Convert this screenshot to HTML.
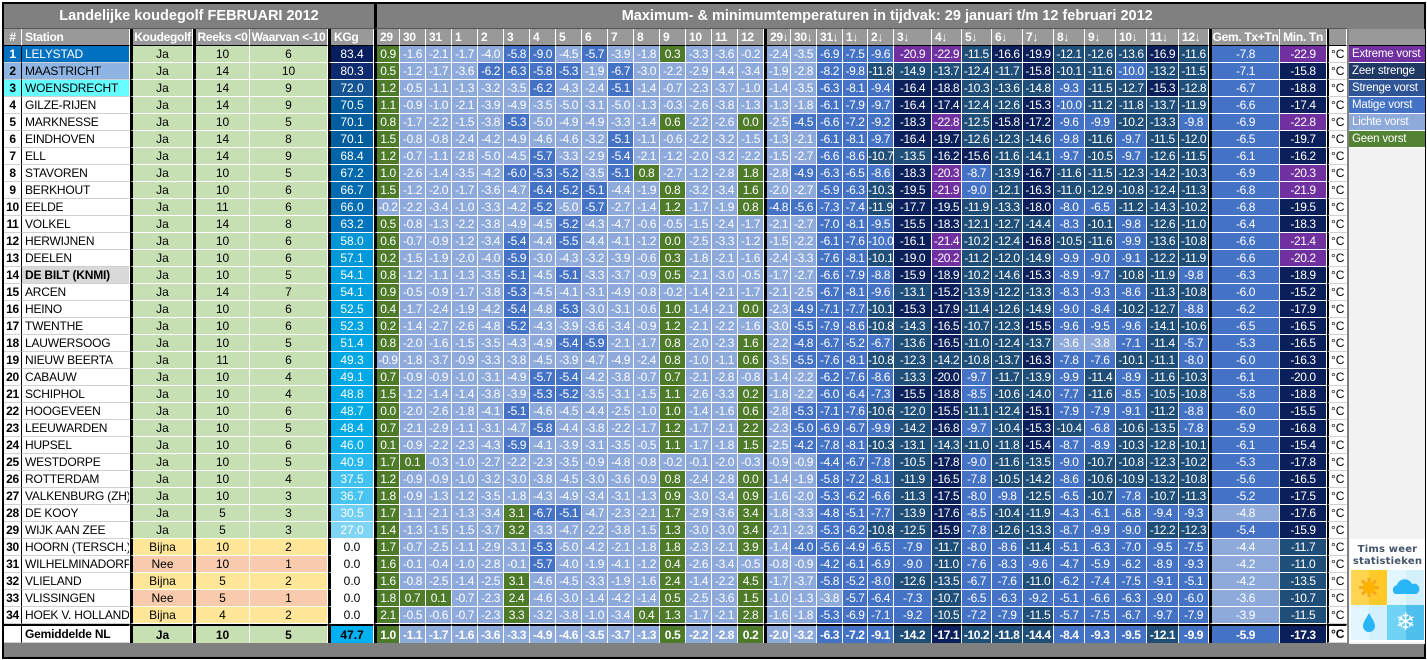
<!DOCTYPE html>
<html><head><meta charset="utf-8">
<style>
*{box-sizing:border-box;margin:0;padding:0}
body{width:1427px;height:660px;background:#fff;font-family:"Liberation Sans",Arial,sans-serif;overflow:hidden;position:relative}
#outer{position:absolute;left:2px;top:2px;width:1424px;height:657px;border:2px solid #000;background:#808080}
table{position:absolute;left:0;top:0;border-collapse:separate;border-spacing:0;table-layout:fixed;width:1343px}
td{height:17px;padding:0;border-right:1px solid #fff;border-bottom:1px solid #fff;font-size:12px;line-height:16px;white-space:nowrap;overflow:hidden;text-align:center;color:#fff}
tr.t td{height:25px;background:#808080;font-weight:bold;font-size:14.5px;color:#fff;border-bottom:1px solid #555;border-right:none}
tr.h td{background:#999;font-weight:bold;color:#fff;text-align:left;padding-left:3px;border-right:1px solid #fff;border-bottom:1px solid #000;letter-spacing:-0.3px}
tr.h td.c{text-align:center;padding-left:0}
tr.d td{background:#fff;color:#000}
tr.d td:nth-child(1){font-weight:bold;font-size:12px;border-right:1px solid #000;border-bottom:1px solid #d0d0d0;letter-spacing:-0.3px}
tr.d td:nth-child(2){text-align:left;padding-left:3px;font-size:12px;letter-spacing:-0.2px;border-bottom:1px solid #d0d0d0}
td.tl{border-left:3px solid #000!important}
td.tl2{border-left:2px solid #000!important}
td.tp{letter-spacing:-0.4px;color:#fff!important}
tr.f td{border-top:2px solid #000;height:19px;font-weight:bold;border-bottom:none}
#legend{position:absolute;left:1345px;top:25px;width:76px;height:615px;background:#f2f2f2}
#legend div.hd{height:17px;background:#999;border-bottom:1px solid #000}
#legend div.l{height:17px;color:#fff;font-size:11.5px;line-height:16px;padding-left:3px;border-bottom:1px solid #fff;white-space:nowrap;overflow:hidden;letter-spacing:-0.2px}
#logo{position:absolute;left:1346px;top:535px;width:75px;height:103px;background:#fff}
#logo .tx{font-family:"DejaVu Sans",sans-serif;font-weight:bold;color:#44546a;font-size:10px;text-align:center;line-height:12px;padding-top:5px;letter-spacing:0.2px}
</style></head><body>
<div id="outer">
<table id="tb">
<colgroup><col style="width:18px"><col style="width:108px"><col style="width:63px"><col style="width:57px"><col style="width:78px"><col style="width:46px">
<col style="width:26px"><col style="width:26px"><col style="width:26px"><col style="width:26px"><col style="width:26px"><col style="width:26px"><col style="width:26px"><col style="width:26px"><col style="width:26px"><col style="width:26px"><col style="width:26px"><col style="width:26px"><col style="width:26px"><col style="width:26px"><col style="width:26px">
<col style="width:27px"><col style="width:26px"><col style="width:26px"><col style="width:25px"><col style="width:26px"><col style="width:38px"><col style="width:30px"><col style="width:30px"><col style="width:31px"><col style="width:31px"><col style="width:31px"><col style="width:31px"><col style="width:31px"><col style="width:32px"><col style="width:30px">
<col style="width:71px"><col style="width:47px"><col style="width:20px"></colgroup>
<tr class="t"><td colspan="6">Landelijke koudegolf FEBRUARI 2012</td><td colspan="33" style="border-left:3px solid #000;padding-left:50px">Maximum- &amp; minimumtemperaturen in tijdvak: 29 januari t/m 12 februari 2012</td></tr>
<tr class="h"><td class="c">#<td>Station<td class="c">Koudegolf<td class="c">Reeks &lt;0<td class="c">Waarvan &lt;-10<td>KGg<td>29<td>30<td>31<td>1<td>2<td>3<td>4<td>5<td>6<td>7<td>8<td>9<td>10<td>11<td>12<td>29↓<td>30↓<td>31↓<td>1↓<td>2↓<td>3↓<td>4↓<td>5↓<td>6↓<td>7↓<td>8↓<td>9↓<td>10↓<td>11↓<td>12↓<td class="c">Gem. Tx+Tn<td class="c">Min. Tn<td></tr>
<tr class="d"><td>1<td>LELYSTAD<td>Ja<td>10<td>6<td>83.4<td>0.9<td>-1.6<td>-2.1<td>-1.7<td>-4.0<td>-5.8<td>-9.0<td>-4.5<td>-5.7<td>-3.9<td>-1.8<td>0.3<td>-3.3<td>-3.6<td>-0.2<td>-2.4<td>-3.5<td>-6.9<td>-7.5<td>-9.6<td>-20.9<td>-22.9<td>-11.5<td>-16.6<td>-19.9<td>-12.1<td>-12.6<td>-13.6<td>-16.9<td>-11.6<td>-7.8<td>-22.9<td>°C</tr>
<tr class="d"><td>2<td>MAASTRICHT<td>Ja<td>14<td>10<td>80.3<td>0.5<td>-1.2<td>-1.7<td>-3.6<td>-6.2<td>-6.3<td>-5.8<td>-5.3<td>-1.9<td>-6.7<td>-3.0<td>-2.2<td>-2.9<td>-4.4<td>-3.4<td>-1.9<td>-2.8<td>-8.2<td>-9.8<td>-11.8<td>-14.9<td>-13.7<td>-12.4<td>-11.7<td>-15.8<td>-10.1<td>-11.6<td>-10.0<td>-13.2<td>-11.5<td>-7.1<td>-15.8<td>°C</tr>
<tr class="d"><td>3<td>WOENSDRECHT<td>Ja<td>14<td>9<td>72.0<td>1.2<td>-0.5<td>-1.1<td>-1.3<td>-3.2<td>-3.5<td>-6.2<td>-4.3<td>-2.4<td>-5.1<td>-1.4<td>-0.7<td>-2.3<td>-3.7<td>-1.0<td>-1.4<td>-3.5<td>-6.3<td>-8.1<td>-9.4<td>-16.4<td>-18.8<td>-10.3<td>-13.6<td>-14.8<td>-9.3<td>-11.5<td>-12.7<td>-15.3<td>-12.8<td>-6.7<td>-18.8<td>°C</tr>
<tr class="d"><td>4<td>GILZE-RIJEN<td>Ja<td>14<td>9<td>70.5<td>1.1<td>-0.9<td>-1.0<td>-2.1<td>-3.9<td>-4.9<td>-3.5<td>-5.0<td>-3.1<td>-5.0<td>-1.3<td>-0.3<td>-2.6<td>-3.8<td>-1.3<td>-1.3<td>-1.8<td>-6.1<td>-7.9<td>-9.7<td>-16.4<td>-17.4<td>-12.4<td>-12.6<td>-15.3<td>-10.0<td>-11.2<td>-11.8<td>-13.7<td>-11.9<td>-6.6<td>-17.4<td>°C</tr>
<tr class="d"><td>5<td>MARKNESSE<td>Ja<td>10<td>5<td>70.1<td>0.8<td>-1.7<td>-2.2<td>-1.5<td>-3.8<td>-5.3<td>-5.0<td>-4.9<td>-4.9<td>-3.3<td>-1.4<td>0.6<td>-2.2<td>-2.6<td>0.0<td>-2.5<td>-4.5<td>-6.6<td>-7.2<td>-9.2<td>-18.3<td>-22.8<td>-12.5<td>-15.8<td>-17.2<td>-9.6<td>-9.9<td>-10.2<td>-13.3<td>-9.8<td>-6.9<td>-22.8<td>°C</tr>
<tr class="d"><td>6<td>EINDHOVEN<td>Ja<td>14<td>8<td>70.1<td>1.5<td>-0.8<td>-0.8<td>-2.4<td>-4.2<td>-4.9<td>-4.6<td>-4.6<td>-3.2<td>-5.1<td>-1.1<td>-0.6<td>-2.2<td>-3.2<td>-1.5<td>-1.3<td>-2.1<td>-6.1<td>-8.1<td>-9.7<td>-16.4<td>-19.7<td>-12.6<td>-12.3<td>-14.6<td>-9.8<td>-11.6<td>-9.7<td>-11.5<td>-12.0<td>-6.5<td>-19.7<td>°C</tr>
<tr class="d"><td>7<td>ELL<td>Ja<td>14<td>9<td>68.4<td>1.2<td>-0.7<td>-1.1<td>-2.8<td>-5.0<td>-4.5<td>-5.7<td>-3.3<td>-2.9<td>-5.4<td>-2.1<td>-1.2<td>-2.0<td>-3.2<td>-2.2<td>-1.5<td>-2.7<td>-6.6<td>-8.6<td>-10.7<td>-13.5<td>-16.2<td>-15.6<td>-11.6<td>-14.1<td>-9.7<td>-10.5<td>-9.7<td>-12.6<td>-11.5<td>-6.1<td>-16.2<td>°C</tr>
<tr class="d"><td>8<td>STAVOREN<td>Ja<td>10<td>5<td>67.2<td>1.0<td>-2.6<td>-1.4<td>-3.5<td>-4.2<td>-6.0<td>-5.3<td>-5.2<td>-3.5<td>-5.1<td>0.8<td>-2.7<td>-1.2<td>-2.8<td>1.8<td>-2.8<td>-4.9<td>-6.3<td>-6.5<td>-8.6<td>-18.3<td>-20.3<td>-8.7<td>-13.9<td>-16.7<td>-11.6<td>-11.5<td>-12.3<td>-14.2<td>-10.3<td>-6.9<td>-20.3<td>°C</tr>
<tr class="d"><td>9<td>BERKHOUT<td>Ja<td>10<td>6<td>66.7<td>1.5<td>-1.2<td>-2.0<td>-1.7<td>-3.6<td>-4.7<td>-6.4<td>-5.2<td>-5.1<td>-4.4<td>-1.9<td>0.8<td>-3.2<td>-3.4<td>1.6<td>-2.0<td>-2.7<td>-5.9<td>-6.3<td>-10.3<td>-19.5<td>-21.9<td>-9.0<td>-12.1<td>-16.3<td>-11.0<td>-12.9<td>-10.8<td>-12.4<td>-11.3<td>-6.8<td>-21.9<td>°C</tr>
<tr class="d"><td>10<td>EELDE<td>Ja<td>11<td>6<td>66.0<td>-0.2<td>-2.2<td>-3.4<td>-1.0<td>-3.3<td>-4.2<td>-5.2<td>-5.0<td>-5.7<td>-2.7<td>-1.4<td>1.2<td>-1.7<td>-1.9<td>0.8<td>-4.8<td>-5.6<td>-7.3<td>-7.4<td>-11.9<td>-17.7<td>-19.5<td>-11.9<td>-13.3<td>-18.0<td>-8.0<td>-6.5<td>-11.2<td>-14.3<td>-10.2<td>-6.8<td>-19.5<td>°C</tr>
<tr class="d"><td>11<td>VOLKEL<td>Ja<td>14<td>8<td>63.2<td>0.5<td>-0.8<td>-1.3<td>-2.2<td>-3.8<td>-4.9<td>-4.5<td>-5.2<td>-4.3<td>-4.7<td>-0.6<td>-0.5<td>-1.5<td>-2.4<td>-1.7<td>-2.1<td>-2.7<td>-7.0<td>-8.1<td>-9.5<td>-15.5<td>-18.3<td>-12.1<td>-12.7<td>-14.4<td>-8.3<td>-10.1<td>-9.8<td>-12.6<td>-11.0<td>-6.4<td>-18.3<td>°C</tr>
<tr class="d"><td>12<td>HERWIJNEN<td>Ja<td>10<td>6<td>58.0<td>0.6<td>-0.7<td>-0.9<td>-1.2<td>-3.4<td>-5.4<td>-4.4<td>-5.5<td>-4.4<td>-4.1<td>-1.2<td>0.0<td>-2.5<td>-3.3<td>-1.2<td>-1.5<td>-2.2<td>-6.1<td>-7.6<td>-10.0<td>-16.1<td>-21.4<td>-10.2<td>-12.4<td>-16.8<td>-10.5<td>-11.6<td>-9.9<td>-13.6<td>-10.8<td>-6.6<td>-21.4<td>°C</tr>
<tr class="d"><td>13<td>DEELEN<td>Ja<td>10<td>6<td>57.1<td>0.2<td>-1.5<td>-1.9<td>-2.0<td>-4.0<td>-5.9<td>-3.0<td>-4.3<td>-3.2<td>-3.9<td>-0.6<td>0.3<td>-1.8<td>-2.1<td>-1.6<td>-2.4<td>-3.3<td>-7.6<td>-8.1<td>-10.1<td>-19.0<td>-20.2<td>-11.2<td>-12.0<td>-14.9<td>-9.9<td>-9.0<td>-9.1<td>-12.2<td>-11.9<td>-6.6<td>-20.2<td>°C</tr>
<tr class="d"><td>14<td style="background:#d9d9d9;font-weight:bold">DE BILT (KNMI)<td>Ja<td>10<td>5<td>54.1<td>0.8<td>-1.2<td>-1.1<td>-1.3<td>-3.5<td>-5.1<td>-4.5<td>-5.1<td>-3.3<td>-3.7<td>-0.9<td>0.5<td>-2.1<td>-3.0<td>-0.5<td>-1.7<td>-2.7<td>-6.6<td>-7.9<td>-8.8<td>-15.9<td>-18.9<td>-10.2<td>-14.6<td>-15.3<td>-8.9<td>-9.7<td>-10.8<td>-11.9<td>-9.8<td>-6.3<td>-18.9<td>°C</tr>
<tr class="d"><td>15<td>ARCEN<td>Ja<td>14<td>7<td>54.1<td>0.9<td>-0.5<td>-0.9<td>-1.7<td>-3.8<td>-5.3<td>-4.5<td>-4.1<td>-3.1<td>-4.9<td>-0.8<td>-0.2<td>-1.4<td>-2.1<td>-1.7<td>-2.1<td>-2.5<td>-6.7<td>-8.1<td>-9.6<td>-13.1<td>-15.2<td>-13.9<td>-12.2<td>-13.3<td>-8.3<td>-9.3<td>-8.6<td>-11.3<td>-10.8<td>-6.0<td>-15.2<td>°C</tr>
<tr class="d"><td>16<td>HEINO<td>Ja<td>10<td>6<td>52.5<td>0.4<td>-1.7<td>-2.4<td>-1.9<td>-4.2<td>-5.4<td>-4.8<td>-5.3<td>-3.0<td>-3.1<td>-0.6<td>1.0<td>-1.4<td>-2.1<td>0.0<td>-2.3<td>-4.9<td>-7.1<td>-7.7<td>-10.1<td>-15.3<td>-17.9<td>-11.4<td>-12.6<td>-14.9<td>-9.0<td>-8.4<td>-10.2<td>-12.7<td>-8.8<td>-6.2<td>-17.9<td>°C</tr>
<tr class="d"><td>17<td>TWENTHE<td>Ja<td>10<td>6<td>52.3<td>0.2<td>-1.4<td>-2.7<td>-2.6<td>-4.8<td>-5.2<td>-4.3<td>-3.9<td>-3.6<td>-3.4<td>-0.9<td>1.2<td>-2.1<td>-2.2<td>-1.6<td>-3.0<td>-5.5<td>-7.9<td>-8.6<td>-10.8<td>-14.3<td>-16.5<td>-10.7<td>-12.3<td>-15.5<td>-9.6<td>-9.5<td>-9.6<td>-14.1<td>-10.6<td>-6.5<td>-16.5<td>°C</tr>
<tr class="d"><td>18<td>LAUWERSOOG<td>Ja<td>10<td>5<td>51.4<td>0.8<td>-2.0<td>-1.6<td>-1.5<td>-3.5<td>-4.3<td>-4.9<td>-5.4<td>-5.9<td>-2.1<td>-1.7<td>0.8<td>-2.0<td>-2.3<td>1.6<td>-2.2<td>-4.8<td>-6.7<td>-5.2<td>-6.7<td>-13.6<td>-16.5<td>-11.0<td>-12.4<td>-13.7<td>-3.6<td>-3.8<td>-7.1<td>-11.4<td>-5.7<td>-5.3<td>-16.5<td>°C</tr>
<tr class="d"><td>19<td>NIEUW BEERTA<td>Ja<td>11<td>6<td>49.3<td>-0.9<td>-1.8<td>-3.7<td>-0.9<td>-3.3<td>-3.8<td>-4.5<td>-3.9<td>-4.7<td>-4.9<td>-2.4<td>0.8<td>-1.0<td>-1.1<td>0.6<td>-3.5<td>-5.5<td>-7.6<td>-8.1<td>-10.8<td>-12.3<td>-14.2<td>-10.8<td>-13.7<td>-16.3<td>-7.8<td>-7.6<td>-10.1<td>-11.1<td>-8.0<td>-6.0<td>-16.3<td>°C</tr>
<tr class="d"><td>20<td>CABAUW<td>Ja<td>10<td>4<td>49.1<td>0.7<td>-0.9<td>-0.9<td>-1.0<td>-3.1<td>-4.9<td>-5.7<td>-5.4<td>-4.2<td>-3.8<td>-0.7<td>0.7<td>-2.1<td>-2.8<td>-0.8<td>-1.4<td>-2.2<td>-6.2<td>-7.6<td>-8.6<td>-13.3<td>-20.0<td>-9.7<td>-11.7<td>-13.9<td>-9.9<td>-11.4<td>-8.9<td>-11.6<td>-10.3<td>-6.1<td>-20.0<td>°C</tr>
<tr class="d"><td>21<td>SCHIPHOL<td>Ja<td>10<td>4<td>48.8<td>1.5<td>-1.2<td>-1.4<td>-1.4<td>-3.8<td>-3.9<td>-5.3<td>-5.2<td>-3.5<td>-3.1<td>-1.5<td>1.1<td>-2.6<td>-3.3<td>0.2<td>-1.8<td>-2.2<td>-6.0<td>-6.4<td>-7.3<td>-15.5<td>-18.8<td>-8.5<td>-10.6<td>-14.0<td>-7.7<td>-11.6<td>-8.5<td>-10.5<td>-10.8<td>-5.8<td>-18.8<td>°C</tr>
<tr class="d"><td>22<td>HOOGEVEEN<td>Ja<td>10<td>6<td>48.7<td>0.0<td>-2.0<td>-2.6<td>-1.8<td>-4.1<td>-5.1<td>-4.6<td>-4.5<td>-4.4<td>-2.5<td>-1.0<td>1.0<td>-1.4<td>-1.6<td>0.6<td>-2.8<td>-5.3<td>-7.1<td>-7.6<td>-10.6<td>-12.0<td>-15.5<td>-11.1<td>-12.4<td>-15.1<td>-7.9<td>-7.9<td>-9.1<td>-11.2<td>-8.8<td>-6.0<td>-15.5<td>°C</tr>
<tr class="d"><td>23<td>LEEUWARDEN<td>Ja<td>10<td>5<td>48.4<td>0.7<td>-2.1<td>-2.9<td>-1.1<td>-3.1<td>-4.7<td>-5.8<td>-4.4<td>-3.8<td>-2.2<td>-1.7<td>1.2<td>-1.7<td>-2.1<td>2.2<td>-2.3<td>-5.0<td>-6.9<td>-6.7<td>-9.9<td>-14.2<td>-16.8<td>-9.7<td>-10.4<td>-15.3<td>-10.4<td>-6.8<td>-10.6<td>-13.5<td>-7.8<td>-5.9<td>-16.8<td>°C</tr>
<tr class="d"><td>24<td>HUPSEL<td>Ja<td>10<td>6<td>46.0<td>0.1<td>-0.9<td>-2.2<td>-2.3<td>-4.3<td>-5.9<td>-4.1<td>-3.9<td>-3.1<td>-3.5<td>-0.5<td>1.1<td>-1.7<td>-1.8<td>1.5<td>-2.5<td>-4.2<td>-7.8<td>-8.1<td>-10.3<td>-13.1<td>-14.3<td>-11.0<td>-11.8<td>-15.4<td>-8.7<td>-8.9<td>-10.3<td>-12.8<td>-10.1<td>-6.1<td>-15.4<td>°C</tr>
<tr class="d"><td>25<td>WESTDORPE<td>Ja<td>10<td>5<td>40.9<td>1.7<td>0.1<td>-0.3<td>-1.0<td>-2.7<td>-2.2<td>-2.3<td>-3.5<td>-0.9<td>-4.8<td>-0.8<td>-0.2<td>-0.1<td>-2.0<td>-0.3<td>-0.9<td>-0.9<td>-4.4<td>-6.7<td>-7.8<td>-10.5<td>-17.8<td>-9.0<td>-11.6<td>-13.5<td>-9.0<td>-10.7<td>-10.8<td>-12.3<td>-10.2<td>-5.3<td>-17.8<td>°C</tr>
<tr class="d"><td>26<td>ROTTERDAM<td>Ja<td>10<td>4<td>37.5<td>1.2<td>-0.9<td>-0.9<td>-1.0<td>-3.2<td>-3.0<td>-3.8<td>-4.5<td>-3.0<td>-3.6<td>-0.9<td>0.8<td>-2.4<td>-2.8<td>0.0<td>-1.4<td>-1.9<td>-5.8<td>-7.2<td>-8.1<td>-11.9<td>-16.5<td>-7.8<td>-10.5<td>-14.2<td>-8.6<td>-10.6<td>-10.9<td>-13.2<td>-10.8<td>-5.6<td>-16.5<td>°C</tr>
<tr class="d"><td>27<td>VALKENBURG (ZH)<td>Ja<td>10<td>3<td>36.7<td>1.8<td>-0.9<td>-1.3<td>-1.2<td>-3.5<td>-1.8<td>-4.3<td>-4.9<td>-3.4<td>-3.1<td>-1.3<td>0.9<td>-3.0<td>-3.4<td>0.9<td>-1.6<td>-2.0<td>-5.3<td>-6.2<td>-6.6<td>-11.3<td>-17.5<td>-8.0<td>-9.8<td>-12.5<td>-6.5<td>-10.7<td>-7.8<td>-10.7<td>-11.3<td>-5.2<td>-17.5<td>°C</tr>
<tr class="d"><td>28<td>DE KOOY<td>Ja<td>5<td>3<td>30.5<td>1.7<td>-1.1<td>-2.1<td>-1.3<td>-3.4<td>3.1<td>-6.7<td>-5.1<td>-4.7<td>-2.3<td>-2.1<td>1.7<td>-2.9<td>-3.6<td>3.4<td>-1.8<td>-3.3<td>-4.8<td>-5.1<td>-7.7<td>-13.9<td>-17.6<td>-8.5<td>-10.4<td>-11.9<td>-4.3<td>-6.1<td>-6.8<td>-9.4<td>-9.3<td>-4.8<td>-17.6<td>°C</tr>
<tr class="d"><td>29<td>WIJK AAN ZEE<td>Ja<td>5<td>3<td>27.0<td>1.4<td>-1.3<td>-1.5<td>-1.5<td>-3.7<td>3.2<td>-3.3<td>-4.7<td>-2.2<td>-3.8<td>-1.5<td>1.3<td>-3.0<td>-3.0<td>3.4<td>-2.1<td>-2.3<td>-5.3<td>-6.2<td>-10.8<td>-12.5<td>-15.9<td>-7.8<td>-12.6<td>-13.3<td>-8.7<td>-9.9<td>-9.0<td>-12.2<td>-12.3<td>-5.4<td>-15.9<td>°C</tr>
<tr class="d"><td>30<td>HOORN (TERSCH.)<td>Bijna<td>10<td>2<td>0.0<td>1.7<td>-0.7<td>-2.5<td>-1.1<td>-2.9<td>-3.1<td>-5.3<td>-5.0<td>-4.2<td>-2.1<td>-1.8<td>1.8<td>-2.3<td>-2.1<td>3.9<td>-1.4<td>-4.0<td>-5.6<td>-4.9<td>-6.5<td>-7.9<td>-11.7<td>-8.0<td>-8.6<td>-11.4<td>-5.1<td>-6.3<td>-7.0<td>-9.5<td>-7.5<td>-4.4<td>-11.7<td>°C</tr>
<tr class="d"><td>31<td>WILHELMINADORP<td>Nee<td>10<td>1<td>0.0<td>1.6<td>-0.1<td>-0.4<td>-1.0<td>-2.8<td>-0.1<td>-5.7<td>-4.0<td>-1.9<td>-4.1<td>-1.2<td>0.4<td>-2.6<td>-3.4<td>-0.5<td>-0.8<td>-0.9<td>-4.2<td>-6.1<td>-6.9<td>-9.0<td>-11.0<td>-7.6<td>-8.3<td>-9.6<td>-4.7<td>-5.9<td>-6.2<td>-8.9<td>-9.3<td>-4.2<td>-11.0<td>°C</tr>
<tr class="d"><td>32<td>VLIELAND<td>Bijna<td>5<td>2<td>0.0<td>1.6<td>-0.8<td>-2.5<td>-1.4<td>-2.5<td>3.1<td>-4.6<td>-4.5<td>-3.3<td>-1.9<td>-1.6<td>2.4<td>-1.4<td>-2.2<td>4.5<td>-1.7<td>-3.7<td>-5.8<td>-5.2<td>-8.0<td>-12.6<td>-13.5<td>-6.7<td>-7.6<td>-11.0<td>-6.2<td>-7.4<td>-7.5<td>-9.1<td>-5.1<td>-4.2<td>-13.5<td>°C</tr>
<tr class="d"><td>33<td>VLISSINGEN<td>Nee<td>5<td>1<td>0.0<td>1.8<td>0.7<td>0.1<td>-0.7<td>-2.3<td>2.4<td>-4.6<td>-3.0<td>-1.4<td>-4.2<td>-1.4<td>0.5<td>-2.5<td>-3.6<td>1.5<td>-1.0<td>-1.3<td>-3.8<td>-5.7<td>-6.4<td>-7.3<td>-10.7<td>-6.5<td>-6.3<td>-9.2<td>-5.1<td>-6.6<td>-6.3<td>-9.0<td>-6.0<td>-3.6<td>-10.7<td>°C</tr>
<tr class="d"><td>34<td>HOEK V. HOLLAND<td>Bijna<td>4<td>2<td>0.0<td>2.1<td>-0.5<td>-0.6<td>-0.7<td>-2.3<td>3.3<td>-3.2<td>-3.8<td>-1.0<td>-3.4<td>0.4<td>1.3<td>-1.7<td>-2.1<td>2.8<td>-1.6<td>-1.8<td>-5.3<td>-6.9<td>-7.1<td>-9.2<td>-10.5<td>-7.2<td>-7.9<td>-11.5<td>-5.7<td>-7.5<td>-6.7<td>-9.7<td>-7.9<td>-3.9<td>-11.5<td>°C</tr>
<tr class="d f"><td><td>Gemiddelde NL<td>Ja<td>10<td>5<td>47.7<td>1.0<td>-1.1<td>-1.7<td>-1.6<td>-3.6<td>-3.3<td>-4.9<td>-4.6<td>-3.5<td>-3.7<td>-1.3<td>0.5<td>-2.2<td>-2.8<td>0.2<td>-2.0<td>-3.2<td>-6.3<td>-7.2<td>-9.1<td>-14.2<td>-17.1<td>-10.2<td>-11.8<td>-14.4<td>-8.4<td>-9.3<td>-9.5<td>-12.1<td>-9.9<td>-5.9<td>-17.3<td>°C</tr>
</table>
<div id="legend">
<div class="hd"></div>
<div class="l" style="background:#7030a0">Extreme vorst</div>
<div class="l" style="background:#1f3864">Zeer strenge</div>
<div class="l" style="background:#2f5597">Strenge vorst</div>
<div class="l" style="background:#4472c4">Matige vorst</div>
<div class="l" style="background:#8eaadb">Lichte vorst</div>
<div class="l" style="background:#548235">Geen vorst</div>
</div>
<div id="logo">
<div class="tx">Tims weer<br>statistieken</div>
<svg width="73" height="70" viewBox="0 0 73 70" style="position:absolute;left:1px;top:31px">
<rect x="0" y="0" width="36" height="35" fill="#ffd54f"/><rect x="18" y="0" width="18" height="35" fill="#ffca28"/>
<rect x="36" y="0" width="37" height="35" fill="#e1f7fd"/><rect x="55" y="0" width="18" height="35" fill="#d3f0fb"/>
<rect x="0" y="35" width="36" height="35" fill="#e1f7fd"/><rect x="18" y="35" width="18" height="35" fill="#d3f0fb"/>
<rect x="36" y="35" width="37" height="35" fill="#6fd3f5"/><rect x="55" y="35" width="18" height="35" fill="#4fc0ee"/>
<g stroke="#f5a623" stroke-width="3"><line x1="18" y1="8" x2="18" y2="27"/><line x1="8" y1="17.5" x2="28" y2="17.5"/><line x1="11" y1="10.5" x2="25" y2="24.5"/><line x1="25" y1="10.5" x2="11" y2="24.5"/></g>
<circle cx="18" cy="17.5" r="6" fill="#ffb300"/>
<path d="M44 24 a5 5 0 0 1 2-9 a8 8 0 0 1 15-1 a5 5 0 0 1 4 10 z" fill="#29b6f6"/>
<path d="M18 43 C14 50 12 53 12 56 a6 6 0 0 0 12 0 c0-3-2-6-6-13z" fill="#29b6f6"/>
<text x="54.5" y="60" font-size="24" fill="#fff" text-anchor="middle" font-family="DejaVu Sans">❄</text>
</svg>
</div>
</div>
<script>
(function(){
var C={g:'#4e7b2a',l:'#8eaadb',m:'#4472c4',s:'#1f4e78',z:'#0b1f5a',e:'#7030a0'};
function tx(v){return v>=0?C.g:v>=-5?C.l:v>=-10?C.m:v>=-15?C.s:v>=-20?C.z:C.e;}
function tn(v){return v>=0?C.g:v>-4?C.l:v>=-10?C.m:v>=-15?C.s:v>=-20?C.z:C.e;}
var st=[[0,[255,255,255]],[27,[128,213,245]],[31,[110,206,244]],[37,[70,195,240]],[41,[40,185,238]],[49,[0,170,230]],[54,[0,160,224]],[58,[0,150,214]],[63,[0,118,192]],[67,[0,106,174]],[70.5,[0,92,156]],[72,[20,84,148]],[80.3,[14,42,112]],[84,[4,28,90]]];
function kg(v){if(v<=0)return '#fff';for(var i=1;i<st.length;i++){if(v<=st[i][0]){var a=st[i-1],b=st[i],t=(v-a[0])/(b[0]-a[0]);return 'rgb('+[0,1,2].map(function(k){return Math.round(a[1][k]+(b[1][k]-a[1][k])*t)}).join(',')+')';}}return 'rgb(4,28,90)';}
var thick={2:1,3:1,5:1,6:1,21:1,36:1};
var tb=document.getElementById('tb');
for(var r=1;r<tb.rows.length;r++){
 var row=tb.rows[r],cs=row.cells;
 for(var i=0;i<cs.length;i++){ if(thick[i])cs[i].classList.add('tl'); if(i==38)cs[i].classList.add('tl2'); }
 if(!row.classList.contains('d'))continue;
 var n=r-1;
 if(n==1){cs[0].style.background='#0070c0';cs[0].style.color='#fff';cs[1].style.background='#0070c0';cs[1].style.color='#fff';}
 if(n==2){cs[0].style.background='#8db4e2';cs[1].style.background='#8db4e2';}
 if(n==3){cs[0].style.background='#66ffff';cs[1].style.background='#66ffff';}
 var k=cs[2].textContent, kb=k=='Ja'?'#c6e0b4':k=='Bijna'?'#ffe699':'#f8cbad';
 cs[2].style.background=kb;cs[3].style.background=kb;cs[4].style.background=kb;
 var kv=parseFloat(cs[5].textContent);
 if(row.classList.contains('f')){cs[5].style.background='#00b0f0';cs[5].style.color='#000';}
 else {cs[5].style.background=kg(kv);cs[5].style.color=kv>0?'#fff':'#000';}
 for(var j=6;j<=37;j++){var v=parseFloat(cs[j].textContent);cs[j].classList.add('tp');cs[j].style.background=(j<=20||j==36)?tx(v):tn(v);}
 cs[38].style.color='#000';cs[38].style.fontSize='12px';cs[38].style.borderBottom='1px solid #d0d0d0';
}
})();
</script>
</body></html>
